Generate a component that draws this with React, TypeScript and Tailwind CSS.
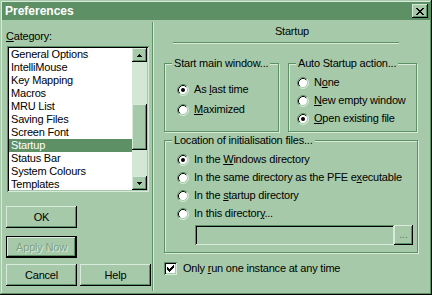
import React from "react";

const raised =
  "bg-[#a6caa9] shadow-[inset_-1px_-1px_0_#000,inset_1px_1px_0_#d8ead9,inset_-2px_-2px_0_#5e9066]";
const sunken =
  "shadow-[inset_1px_1px_0_#5e9066,inset_-1px_-1px_0_#d8ead9,inset_2px_2px_0_#000,inset_-2px_-2px_0_#a6caa9]";

const Radio = ({ on }: { on?: boolean }) => (
  <svg width="12" height="12" viewBox="0 0 12 12" className="shrink-0">
    <circle cx="6" cy="6" r="5" fill="#fff" />
    <path d="M2.11 9.89A5.5 5.5 0 0 1 9.89 2.11" fill="none" stroke="#5e9066" />
    <path d="M9.89 2.11A5.5 5.5 0 0 1 2.11 9.89" fill="none" stroke="#d8ead9" />
    <path d="M2.82 9.18A4.5 4.5 0 0 1 9.18 2.82" fill="none" stroke="#000" />
    <path d="M9.18 2.82A4.5 4.5 0 0 1 2.82 9.18" fill="none" stroke="#a6caa9" />
    {on && <circle cx="6" cy="6" r="2" fill="#000" />}
  </svg>
);

const Option = ({ on, children }: { on?: boolean; children: React.ReactNode }) => (
  <div className="flex items-center gap-[5px] h-[13px] leading-[13px] whitespace-nowrap">
    <Radio on={on} />
    <span>{children}</span>
  </div>
);

const Group = ({ label, className, children }: { label: string; className: string; children: React.ReactNode }) => (
  <div className={"border border-[#5e9066] shadow-[1px_1px_0_#d8ead9,inset_1px_1px_0_#d8ead9] " + className}>
    <div className="-mt-[7px] ml-[7px] px-[2px] w-fit bg-[#a6caa9] leading-[13px]">{label}</div>
    {children}
  </div>
);

const Arrow = ({ up }: { up?: boolean }) => (
  <div className={"h-[14px] flex items-center justify-center " + raised}>
    <svg width="5" height="3" viewBox="0 0 5 3">
      {up ? (
        <>
          <rect x="2" y="0" width="1" height="1" />
          <rect x="1" y="1" width="3" height="1" />
          <rect x="0" y="2" width="5" height="1" />
        </>
      ) : (
        <>
          <rect x="0" y="0" width="5" height="1" />
          <rect x="1" y="1" width="3" height="1" />
          <rect x="2" y="2" width="1" height="1" />
        </>
      )}
    </svg>
  </div>
);

const items = [
  "General Options",
  "IntelliMouse",
  "Key Mapping",
  "Macros",
  "MRU List",
  "Saving Files",
  "Screen Font",
  "Startup",
  "Status Bar",
  "System Colours",
  "Templates",
];

export default function App() {
  return (
    <div className="w-[432px] h-[295px] bg-[#a6caa9] p-[2px] flex flex-col overflow-hidden font-['Liberation_Sans',Arial,sans-serif] text-[11px] tracking-[-0.2px] text-black shadow-[inset_-1px_-1px_0_#000,inset_1px_1px_0_#a6caa9,inset_-2px_-2px_0_#5e9066,inset_2px_2px_0_#d8ead9]">
      {/* title bar */}
      <div className="h-[18px] shrink-0 bg-[#5e9066] flex items-center justify-between pl-[3px] pr-[2px]">
        <span className="text-white font-bold text-[12px] tracking-normal">Preferences</span>
        <div className={"w-[16px] h-[14px] flex items-center justify-center " + raised}>
          <svg width="8" height="7" viewBox="0 0 8 7">
            <rect x="0" y="0" width="2" height="1" />
            <rect x="6" y="0" width="2" height="1" />
            <rect x="1" y="1" width="2" height="1" />
            <rect x="5" y="1" width="2" height="1" />
            <rect x="2" y="2" width="4" height="1" />
            <rect x="3" y="3" width="2" height="1" />
            <rect x="2" y="4" width="4" height="1" />
            <rect x="1" y="5" width="2" height="1" />
            <rect x="5" y="5" width="2" height="1" />
            <rect x="0" y="6" width="2" height="1" />
            <rect x="6" y="6" width="2" height="1" />
          </svg>
        </div>
      </div>

      <div className="flex flex-1 min-h-0">
        {/* left column */}
        <div className="w-[150px] shrink-0 flex flex-col pl-[4px]">
          <div className="mt-[10px] leading-[13px]">
            <u>C</u>ategory:
          </div>
          <div className={"mt-[3px] ml-[1px] w-[142px] h-[146px] bg-white p-[2px] flex " + sunken}>
            <div className="flex-1 overflow-hidden">
              {items.map((it) => (
                <div
                  key={it}
                  className={
                    "h-[13px] leading-[13px] pl-[2px] whitespace-nowrap " +
                    (it === "Startup" ? "bg-[#5e9066] text-white" : "")
                  }
                >
                  {it}
                </div>
              ))}
            </div>
            <div className="w-[15px] flex flex-col">
              <Arrow up />
              <div className="h-[42px] bg-[#d3e7d5]" />
              <div className={"h-[46px] " + raised} />
              <div className="flex-1 bg-[#d3e7d5]" />
              <Arrow />
            </div>
          </div>
          <div className={"mt-[14px] w-[71px] h-[22px] flex items-center justify-center " + raised}>OK</div>
          <div className="mt-[8px] w-[71px] h-[22px] border border-black">
            <div className={"h-full flex items-center justify-center text-[#7fa183] [text-shadow:1px_1px_0_#d8ead9] " + raised}>
              Apply Now
            </div>
          </div>
          <div className="mt-[6px] flex gap-[3px]">
            <div className={"w-[71px] h-[22px] flex items-center justify-center " + raised}>Cancel</div>
            <div className={"w-[71px] h-[22px] flex items-center justify-center " + raised}>Help</div>
          </div>
        </div>

        {/* divider */}
        <div className="w-[2px] my-[2px] border-l border-l-[#5e9066] border-r border-r-[#d8ead9]" />

        {/* right pane */}
        <div className="flex-1 flex flex-col">
          <div className="mt-[5px] text-center leading-[13px]">Startup</div>
          <div className="mt-[4px] ml-[19px] mr-[31px] h-[2px] border-t border-t-[#5e9066] border-b border-b-[#d8ead9]" />

          <div className="mt-[19px] ml-[10px] flex gap-[9px]">
            <Group label="Start main window..." className="w-[115px] h-[69px]">
              <div className="mt-[13px] pl-[12px] flex flex-col gap-[7px]">
                <Option on>
                  As <u>l</u>ast time
                </Option>
                <Option>
                  <u>M</u>aximized
                </Option>
              </div>
            </Group>
            <Group label="Auto Startup action..." className="w-[129px] h-[69px]">
              <div className="mt-[6px] pl-[8px] flex flex-col gap-[5px]">
                <Option>
                  N<u>o</u>ne
                </Option>
                <Option>
                  <u>N</u>ew empty window
                </Option>
                <Option on>
                  <u>O</u>pen existing file
                </Option>
              </div>
            </Group>
          </div>

          <Group label="Location of initialisation files..." className="mt-[8px] ml-[10px] w-[254px] pb-[7px]">
            <div className="mt-[6px] pl-[12px] flex flex-col gap-[5px]">
              <Option on>
                In the <u>W</u>indows directory
              </Option>
              <Option>
                In the same directory as the PFE e<u>x</u>ecutable
              </Option>
              <Option>
                In the <u>s</u>tartup directory
              </Option>
              <Option>
                In this director<u>y</u>...
              </Option>
            </div>
            <div className="mt-[5px] pl-[30px] flex">
              <div className={"w-[199px] h-[20px] bg-[#a6caa9] " + sunken} />
              <div className={"w-[19px] h-[20px] flex items-center justify-center text-[10px] leading-[10px] tracking-normal text-[#5a7f5e] " + raised}>
                ...
              </div>
            </div>
          </Group>

          <div className="mt-[9px] ml-[10px] flex items-center gap-[6px] h-[13px]">
            <div className={"w-[13px] h-[13px] bg-white flex items-center justify-center " + sunken}>
              <svg width="7" height="7" viewBox="0 0 7 7">
                <rect x="6" y="0" width="1" height="1" />
                <rect x="5" y="1" width="2" height="1" />
                <rect x="0" y="2" width="1" height="1" />
                <rect x="4" y="2" width="3" height="1" />
                <rect x="0" y="3" width="2" height="1" />
                <rect x="3" y="3" width="3" height="1" />
                <rect x="0" y="4" width="5" height="1" />
                <rect x="1" y="5" width="3" height="1" />
                <rect x="2" y="6" width="1" height="1" />
              </svg>
            </div>
            <span className="leading-[13px]">
              Only <u>r</u>un one instance at any time
            </span>
          </div>
        </div>
      </div>
    </div>
  );
}
